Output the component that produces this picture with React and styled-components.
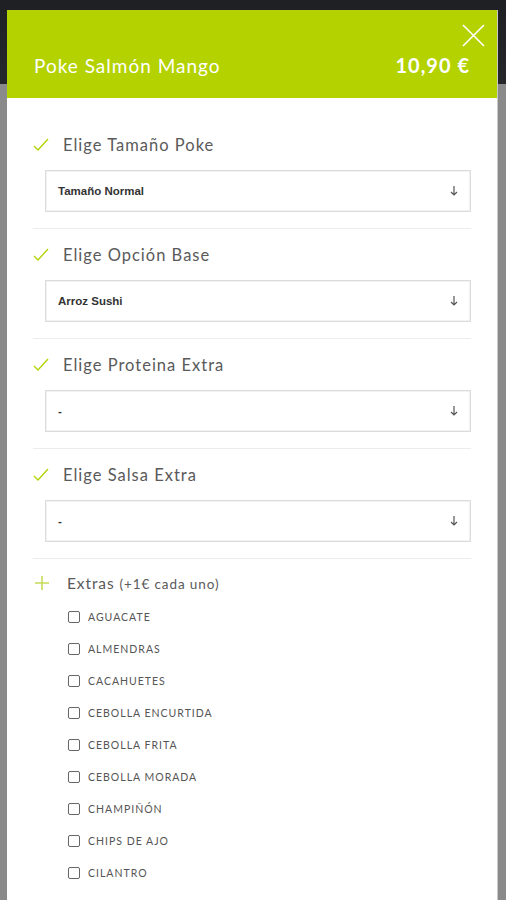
import React from "react"
import styled, { createGlobalStyle } from "styled-components"

const GlobalStyle = createGlobalStyle`
  html, body {
    margin: 0;
    padding: 0;
  }
  body {
    background: linear-gradient(#1f2023 0, #26272a 84px, #8a8a8a 84px, #8a8a8a 100%);
    font-family: Lato, "Open Sans", sans-serif;
    height: 900px;
    overflow: hidden;
  }
`

const Modal = styled.div`
  margin: 10px 0 0 7px;
  width: 490px;
  height: 890px;
  background: #fff;
  display: flex;
  flex-direction: column;
  box-shadow: 1px 0 0 #c9c9c9;
`

const Header = styled.div`
  position: relative;
  flex-shrink: 0;
  background: #b3d200;
  height: 88px;
  display: flex;
  align-items: flex-end;
  justify-content: space-between;
  padding: 0 27px 21px 27px;
  box-sizing: border-box;
  color: #fff;
`

const Title = styled.div`
  font-size: 19px;
  letter-spacing: 1px;
`

const Price = styled.div`
  font-size: 20px;
  font-weight: 700;
  letter-spacing: 1px;
`

const Close = styled.svg`
  position: absolute;
  top: 14px;
  right: 12px;
`

const Body = styled.div`
  padding: 21px 26px 0 26px;
`

const Section = styled.div`
  padding: 14px 0 16px 0;
  border-bottom: 1px solid #ececec;
  display: flex;
  flex-direction: column;
  gap: 13px;
`

const SectionTitle = styled.div`
  display: flex;
  align-items: center;
  height: 24px;
  gap: 14px;
  font-size: 16.5px;
  letter-spacing: 1px;
  color: #5a5a5a;
`

const Select = styled.div`
  margin-left: 12px;
  height: 42px;
  border: 1px solid #dcdcdc;
  box-shadow: inset 0 0 0 1px #f2f2f2;
  display: flex;
  align-items: center;
  justify-content: space-between;
  padding: 0 12px 0 12px;
  box-sizing: border-box;
  font-family: "Liberation Sans", Arial, sans-serif;
  font-size: 11.5px;
  font-weight: 700;
  color: #333;
`

const Extras = styled.div`
  padding-top: 12px;
`

const ExtrasTitle = styled(SectionTitle)`
  gap: 18px;
  font-size: 15.5px;
  letter-spacing: 0.9px;
  padding-left: 2px;
`

const Small = styled.span`
  font-size: 13.5px;
`

const List = styled.div`
  display: flex;
  flex-direction: column;
  padding: 6px 0 0 35px;
`

const Item = styled.label`
  display: flex;
  align-items: center;
  gap: 8px;
  height: 32px;
  font-size: 10.5px;
  color: #555;
  letter-spacing: 1px;
`

const Box = styled.span`
  width: 10px;
  height: 10px;
  border: 1.5px solid #666;
  border-radius: 2px;
`

const Check = () => (
  <svg width="16" height="14" viewBox="0 0 16 14">
    <path d="M1 8 L5 12 L15 1" fill="none" stroke="#b3d200" strokeWidth="1.3" />
  </svg>
)

const Plus = () => (
  <svg width="14" height="14" viewBox="0 0 14 14">
    <path d="M7 0 V14 M0 7 H14" fill="none" stroke="#c8dc5a" strokeWidth="1.6" />
  </svg>
)

const Arrow = () => (
  <svg width="8" height="10" viewBox="0 0 8 10">
    <path d="M4 0 V9 M1 6 L4 9 L7 6" fill="none" stroke="#555" strokeWidth="1.2" />
  </svg>
)

const sections = [
  { title: "Elige Tamaño Poke", value: "Tamaño Normal" },
  { title: "Elige Opción Base", value: "Arroz Sushi" },
  { title: "Elige Proteina Extra", value: "-" },
  { title: "Elige Salsa Extra", value: "-" },
]

const extras = [
  "AGUACATE", "ALMENDRAS", "CACAHUETES", "CEBOLLA ENCURTIDA", "CEBOLLA FRITA",
  "CEBOLLA MORADA", "CHAMPIÑÓN", "CHIPS DE AJO", "CILANTRO",
]

export default function App() {
  return (
    <>
      <GlobalStyle />
      <Modal>
        <Header>
          <Title>Poke Salmón Mango</Title>
          <Price>10,90 €</Price>
          <Close width="23" height="23" viewBox="0 0 23 23">
            <path d="M1 1 L22 22 M22 1 L1 22" stroke="#fff" strokeWidth="1.6" fill="none" />
          </Close>
        </Header>
        <Body>
          {sections.map((s) =>
            <Section key={s.title}>
              <SectionTitle>
                <Check />
                {s.title}
              </SectionTitle>
              <Select>
                <span>{s.value}</span>
                <Arrow />
              </Select>
            </Section>
          )}
          <Extras>
            <ExtrasTitle>
              <Plus />
              <span>Extras <Small>(+1€ cada uno)</Small></span>
            </ExtrasTitle>
            <List>
              {extras.map((e) =>
                <Item key={e}>
                  <Box />
                  {e}
                </Item>
              )}
            </List>
          </Extras>
        </Body>
      </Modal>
    </>
  )
}
